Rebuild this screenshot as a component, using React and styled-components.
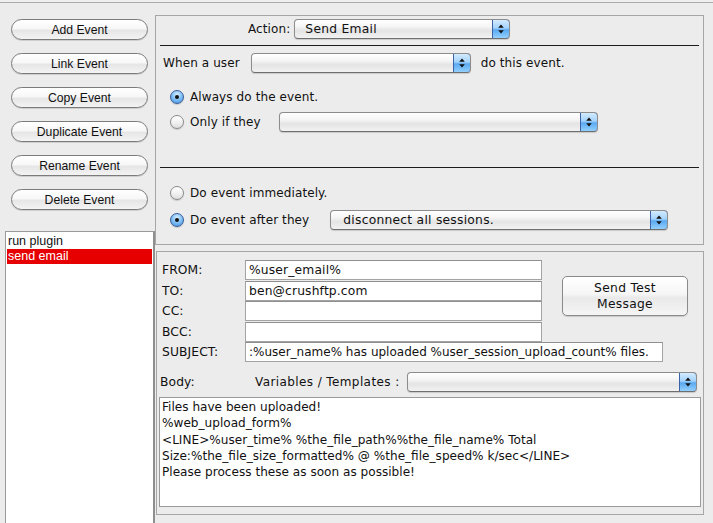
import React from "react";
import styled, { createGlobalStyle } from "styled-components";

const Global = createGlobalStyle`
  html, body { margin: 0; padding: 0; background: #ececec; }
  body { font-family: "DejaVu Sans", "Noto Sans", sans-serif; }
  #root { width: 713px; height: 523px; }
`;

const Root = styled.div`
  width: 713px;
  height: 523px;
  overflow: hidden;
  background: #ececec;
  display: grid;
  grid-template-columns: 155px 558px;
  grid-template-rows: 3px 520px;
  color: #111;
  font-family: "DejaVu Sans", sans-serif;
  font-size: 12px;
  letter-spacing: 0.1px;
`;

const TopRule = styled.div`
  grid-column: 1 / span 2;
  box-sizing: border-box;
  border-bottom: 1px solid #ababab;
  background: #efefef;
`;

const LeftCol = styled.div`
  display: flex;
  flex-direction: column;
  min-height: 0;
`;

const ButtonStack = styled.div`
  display: flex;
  flex-direction: column;
  gap: 13px;
  padding: 16px 0 0 11px;
`;

const PillButton = styled.div`
  width: 137px;
  height: 21px;
  box-sizing: border-box;
  border: 1px solid #7b7b7b;
  border-radius: 11px;
  background: linear-gradient(#ffffff 0%, #f7f7f7 45%, #e6e6e6 55%, #f3f3f3 100%);
  box-shadow: 0 1px 0 rgba(0, 0, 0, 0.12);
  display: flex;
  align-items: center;
  justify-content: center;
  font-family: "Liberation Sans", Arial, sans-serif;
  font-size: 12.2px;
  letter-spacing: 0;
  color: #111;
`;

const EventList = styled.div`
  margin: 21px 0 0 5px;
  width: 150px;
  flex: 1;
  box-sizing: border-box;
  background: #fff;
  border: 1px solid #9a9a9a;
  border-right: 2px solid #8f8f8f;
  border-bottom: none;
  padding-top: 2px;
`;

const ListItem = styled.div`
  height: 15px;
  line-height: 15px;
  margin-left: 1px;
  margin-right: 1px;
  padding-left: 1px;
  font-family: "Liberation Sans", Arial, sans-serif;
  font-size: 12.5px;
  letter-spacing: 0;
  background: ${(p) => (p.$selected ? "#e60000" : "transparent")};
  color: ${(p) => (p.$selected ? "#fff" : "#111")};
`;

const RightCol = styled.div`
  display: flex;
  flex-direction: column;
  min-height: 0;
`;

const TopPanel = styled.div`
  margin: 12px 9px 0 0;
  height: 230px;
  box-sizing: border-box;
  border: 1px solid #a6a6a6;
  display: flex;
  flex-direction: column;
`;

const Row = styled.div`
  display: flex;
  align-items: center;
  height: 20px;
  margin-top: ${(p) => p.$mt || 0}px;
  padding-left: ${(p) => p.$pl || 0}px;
`;

const Label = styled.span`
  white-space: nowrap;
  margin-left: ${(p) => p.$ml || 0}px;
  margin-right: ${(p) => p.$mr || 0}px;
  letter-spacing: ${(p) => p.$ls ?? 0.1}px;
`;

const BlackRule = styled.div`
  height: 1px;
  background: #1c1c1c;
  margin: ${(p) => p.$mt}px 4px 0 4px;
`;

const SelectBox = styled.div`
  width: ${(p) => p.$w}px;
  height: 20px;
  margin-left: ${(p) => p.$ml || 0}px;
  box-sizing: border-box;
  border: 1px solid #8c8c8c;
  border-bottom-color: #6f6f6f;
  border-radius: 4px;
  background: linear-gradient(#ffffff 0%, #f6f6f6 35%, #e4e4e4 60%, #f2f2f2 100%);
  box-shadow: 0 1px 1px rgba(0, 0, 0, 0.15);
  display: flex;
  align-items: center;
  overflow: hidden;
`;

const SelectText = styled.span`
  flex: 1;
  padding-left: ${(p) => p.$pl || 10}px;
  white-space: nowrap;
  font-size: 12.3px;
  letter-spacing: 0.25px;
`;

const SelectArrow = styled.span`
  width: 18px;
  box-sizing: border-box;
  margin-right: -1px;
  border: 1px solid #3d62a8;
  border-radius: 0 4px 4px 0;
  height: 20px;
  background: linear-gradient(#d3ebff 0%, #a3d2fb 45%, #5aa9f1 55%, #93d0ff 100%);
  display: flex;
  align-items: center;
  justify-content: center;
`;

const Arrows = () => (
  <svg width="6" height="10" viewBox="0 0 6 10">
    <polygon points="3,0.5 5.8,3.8 0.2,3.8" fill="#111" />
    <polygon points="0.2,6.2 5.8,6.2 3,9.5" fill="#111" />
  </svg>
);

const Select = ({ w, ml, value, pl }) => (
  <SelectBox $w={w} $ml={ml}>
    <SelectText $pl={pl}>{value}</SelectText>
    <SelectArrow>
      <Arrows />
    </SelectArrow>
  </SelectBox>
);

const RadioDot = styled.span`
  width: 14px;
  height: 14px;
  flex: none;
  box-sizing: border-box;
  border-radius: 50%;
  border: 1px solid ${(p) => (p.$on ? "#3a5d99" : "#8a8a8a")};
  background: ${(p) =>
    p.$on
      ? "radial-gradient(circle at 50% 30%, #d8efff 0%, #86c3f7 45%, #3f8fe0 100%)"
      : "linear-gradient(#ffffff 0%, #f2f2f2 50%, #dedede 100%)"};
  box-shadow: 0 1px 1px rgba(0, 0, 0, 0.15);
  display: flex;
  align-items: center;
  justify-content: center;
  margin-right: 6px;
  &::after {
    content: "";
    display: ${(p) => (p.$on ? "block" : "none")};
    width: 4px;
    height: 4px;
    border-radius: 50%;
    background: #111;
  }
`;

const BottomPanel = styled.div`
  margin: 6px 9px 0 1px;
  height: 264px;
  box-sizing: border-box;
  border: 1px solid #a6a6a6;
  display: flex;
  flex-direction: column;
`;

const FormGrid = styled.div`
  margin-top: 8px;
  padding-left: 5px;
  display: grid;
  grid-template-columns: 83px 297px 20px 126px;
  grid-template-rows: 21px 20px 21px 20px 20px;
`;

const FieldLabel = styled.div`
  grid-column: 1;
  grid-row: ${(p) => p.$row};
  display: flex;
  align-items: center;
  height: 20px;
  font-size: 12.3px;
`;

const Field = styled.div`
  grid-column: ${(p) => (p.$wide ? "2 / span 3" : "2")};
  grid-row: ${(p) => p.$row};
  width: ${(p) => (p.$wide ? "418px" : "297px")};
  height: 20px;
  box-sizing: border-box;
  border: 1px solid #a3a3a3;
  border-top-color: #8f8f8f;
  background: #fff;
  display: flex;
  align-items: center;
  padding-left: 3px;
  white-space: nowrap;
  overflow: hidden;
  font-size: ${(p) => (p.$wide ? "12px" : "12.3px")};
  letter-spacing: ${(p) => (p.$wide ? "0" : "0.15px")};
`;

const TestButton = styled.div`
  grid-column: 4;
  grid-row: 1 / span 3;
  align-self: end;
  margin-bottom: 6px;
  height: 40px;
  box-sizing: border-box;
  border: 1px solid #8a8a8a;
  border-radius: 5px;
  background: linear-gradient(#ffffff 0%, #f6f6f6 45%, #e9e9e9 55%, #f5f5f5 100%);
  box-shadow: 0 1px 1px rgba(0, 0, 0, 0.15);
  display: flex;
  align-items: center;
  justify-content: center;
  text-align: center;
  font-size: 12.3px;
  line-height: 16px;
  letter-spacing: 0.3px;
`;

const BodyRow = styled.div`
  display: flex;
  align-items: center;
  height: 20px;
  margin-top: 10px;
  padding-left: 3px;
`;

const BodyLabel = styled.span`
  width: 95px;
  font-size: 12.3px;
`;

const TextArea = styled.div`
  margin: 5px 0 0 2px;
  width: 542px;
  height: 110px;
  box-sizing: border-box;
  border: 1px solid #9a9a9a;
  background: #fff;
  padding: 1px 0 0 2px;
  font-size: 12.1px;
  line-height: 16.25px;
  letter-spacing: 0;
  white-space: pre;
`;

const buttons = [
  "Add Event",
  "Link Event",
  "Copy Event",
  "Duplicate Event",
  "Rename Event",
  "Delete Event",
];

const fields = [
  ["FROM:", "%user_email%"],
  ["TO:", "ben@crushftp.com"],
  ["CC:", ""],
  ["BCC:", ""],
];

const bodyText = [
  "Files have been uploaded!",
  "%web_upload_form%",
  "<LINE>%user_time% %the_file_path%%the_file_name% Total",
  "Size:%the_file_size_formatted% @ %the_file_speed% k/sec</LINE>",
  "Please process these as soon as possible!",
];

export default function App() {
  return (
    <Root>
      <Global />
      <TopRule />
      <LeftCol>
        <ButtonStack>
          {buttons.map((b) => (
            <PillButton key={b}>{b}</PillButton>
          ))}
        </ButtonStack>
        <EventList>
          <ListItem>run plugin</ListItem>
          <ListItem $selected>send email</ListItem>
        </EventList>
      </LeftCol>
      <RightCol>
        <TopPanel>
          <Row $mt={3} $pl={92}>
            <Label $mr={4}>Action:</Label>
            <Select w={216} value="Send Email" />
          </Row>
          <BlackRule $mt={6} />
          <Row $mt={7} $pl={7}>
            <Label>When a user</Label>
            <Select w={220} ml={11} value="" />
            <Label $ml={10}>do this event.</Label>
          </Row>
          <Row $mt={14} $pl={14}>
            <RadioDot $on />
            <Label>Always do the event.</Label>
          </Row>
          <Row $mt={5} $pl={14}>
            <RadioDot />
            <Label>Only if they</Label>
            <Select w={319} ml={18} value="" />
          </Row>
          <BlackRule $mt={35} />
          <Row $mt={15} $pl={14}>
            <RadioDot />
            <Label>Do event immediately.</Label>
          </Row>
          <Row $mt={7} $pl={14}>
            <RadioDot $on />
            <Label>Do event after they</Label>
            <Select w={338} ml={21} pl={12} value="disconnect all sessions." />
          </Row>
        </TopPanel>
        <BottomPanel>
          <FormGrid>
            {fields.map(([label, value], i) => (
              <React.Fragment key={label}>
                <FieldLabel $row={i + 1}>{label}</FieldLabel>
                <Field $row={i + 1}>{value}</Field>
              </React.Fragment>
            ))}
            <FieldLabel $row={5}>SUBJECT:</FieldLabel>
            <Field $wide $row={5}>
              :%user_name% has uploaded %user_session_upload_count% files.
            </Field>
            <TestButton>
              Send Test
              <br />
              Message
            </TestButton>
          </FormGrid>
          <BodyRow>
            <BodyLabel>Body:</BodyLabel>
            <Label $mr={7} $ls={0.4}>
              Variables / Templates :
            </Label>
            <Select w={290} value="" />
          </BodyRow>
          <TextArea>{bodyText.join("\n")}</TextArea>
        </BottomPanel>
      </RightCol>
    </Root>
  );
}
